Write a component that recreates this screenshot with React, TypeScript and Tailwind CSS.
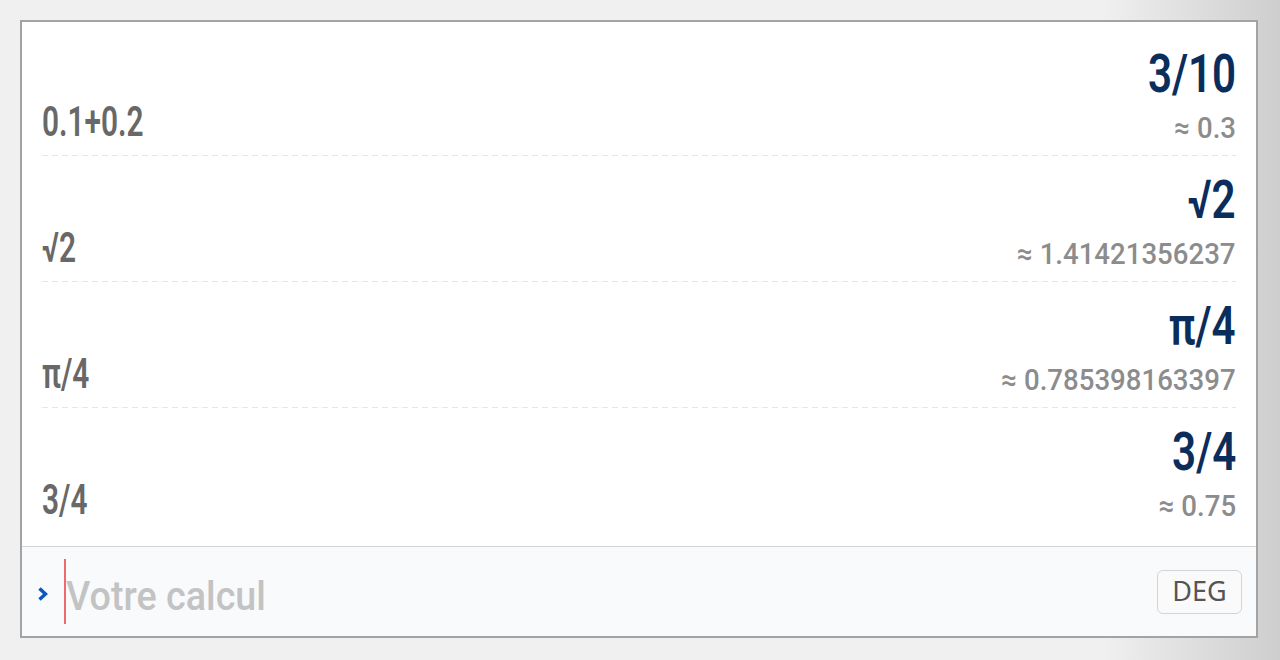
import React from 'react';

type Entry = { expr: string; result: string; approx: string };

const history: Entry[] = [
  { expr: '0.1+0.2', result: '3/10', approx: '0.3' },
  { expr: '√2', result: '√2', approx: '1.41421356237' },
  { expr: 'π/4', result: 'π/4', approx: '0.785398163397' },
  { expr: '3/4', result: '3/4', approx: '0.75' },
];

const font = "font-['Roboto','Liberation_Sans',sans-serif]";

function Row({ entry, last }: { entry: Entry; last: boolean }) {
  return (
    <div className="relative h-[126px] px-5 pb-[13px] flex items-end justify-between">
      <div className={`${font} text-[42px] leading-none font-semibold text-[#686868] scale-x-[0.71] origin-left`}>
        {entry.expr}
      </div>
      <div className={`${font} flex flex-col items-end`}>
        <div className="text-[54px] leading-none font-semibold text-[#0b2d5b] scale-x-[0.78] origin-right">{entry.result}</div>
        <div className="mt-[12px] text-[30px] leading-none font-medium text-[#8c8c8c] scale-x-[0.92] origin-right">≈ {entry.approx}</div>
      </div>
      {!last && (
        <div className="absolute left-5 right-5 bottom-0 h-px bg-[linear-gradient(to_right,#e6e6e6_60%,transparent_60%)] bg-[length:10px_1px] bg-repeat-x" />
      )}
    </div>
  );
}

export default function App() {
  return (
    <div className="w-[1280px] h-[660px] p-5 bg-[linear-gradient(to_right,#f0f0f0_0%,#f0f0f0_86%,#cecece_100%)]">
      <div className="w-[1238px] h-[618px] border-2 border-[#a3a3a3] bg-white flex flex-col">
        {/* historique */}
        <div className="h-[525px] pt-2 flex flex-col border-b border-[#d4d4d4]">
          {history.map((e, i) => (
            <Row key={i} entry={e} last={i === history.length - 1} />
          ))}
        </div>

        {/* saisie */}
        <div className="flex-1 bg-[#f8fafc] flex items-center pl-[15px] pr-[14px]">
          <svg width="11" height="16" viewBox="0 0 11 16" className="text-[#0b57c0] mr-[16px] mt-[4px]">
            <path d="M2.5 2.5 L8.5 8 L2.5 13.5" fill="none" stroke="currentColor" strokeWidth="3.5" />
          </svg>
          <div className="w-[2px] h-[65px] bg-[#ef6a6a]" />
          <div className={`${font} text-[41px] leading-none font-medium text-[#c3c3c3] scale-x-[0.92] origin-left mt-[10px]`}>
            Votre calcul
          </div>
          <div className="ml-auto w-[85px] h-[44px] border border-[#d4d4d4] rounded-[6px] bg-[#fafafa] flex items-center justify-center font-['Noto_Sans',sans-serif] text-[27px] text-[#555]">
            DEG
          </div>
        </div>
      </div>
    </div>
  );
}
